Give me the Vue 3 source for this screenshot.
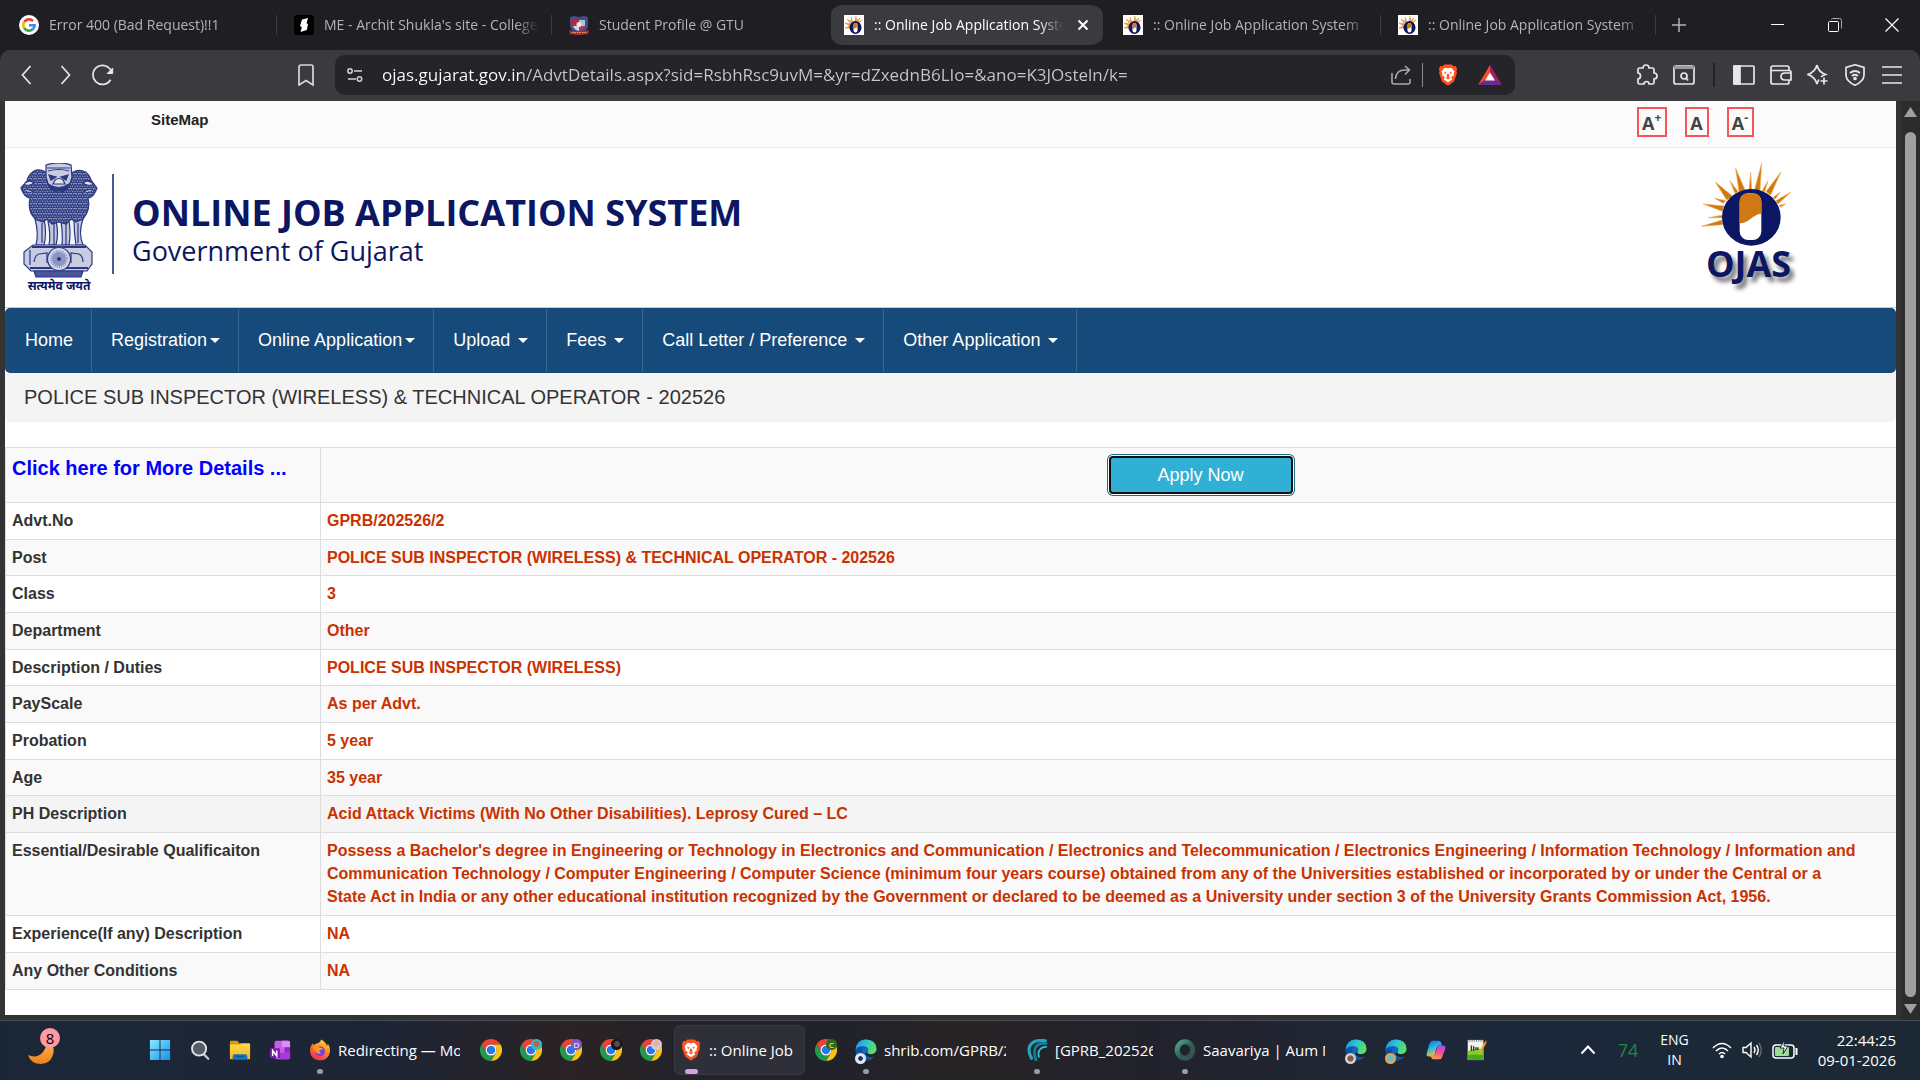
<script setup>
const tabs = [
  { title: 'Error 400 (Bad Request)!!1', icon: 'google' },
  { title: "ME - Archit Shukla's site - College", icon: 'site' },
  { title: 'Student Profile @ GTU', icon: 'gtu', last: true },
  { title: ':: Online Job Application System', icon: 'ojas', active: true },
  { title: ':: Online Job Application System', icon: 'ojas' },
  { title: ':: Online Job Application System', icon: 'ojas' },
]

const menu = [
  { text: 'Home' },
  { text: 'Registration', caret: true },
  { text: 'Online Application', caret: true },
  { text: 'Upload', caret: true, spaced: true },
  { text: 'Fees', caret: true, spaced: true },
  { text: 'Call Letter / Preference', caret: true, spaced: true },
  { text: 'Other Application', caret: true, spaced: true },
]

const details = [
  ['Advt.No', 'GPRB/202526/2'],
  ['Post', 'POLICE SUB INSPECTOR (WIRELESS) & TECHNICAL OPERATOR - 202526'],
  ['Class', '3'],
  ['Department', 'Other'],
  ['Description / Duties', 'POLICE SUB INSPECTOR (WIRELESS)'],
  ['PayScale', 'As per Advt.'],
  ['Probation', '5 year'],
  ['Age', '35 year'],
  ['PH Description', 'Acid Attack Victims (With No Other Disabilities). Leprosy Cured – LC'],
  [
    'Essential/Desirable Qualificaiton',
    "Possess a Bachelor's degree in Engineering or Technology in Electronics and Communication / Electronics and Telecommunication / Electronics Engineering / Information Technology / Information and Communication Technology / Computer Engineering / Computer Science (minimum four years course) obtained from any of the Universities established or incorporated by or under the Central or a State Act in India or any other educational institution recognized by the Government or declared to be deemed as a University under section 3 of the University Grants Commission Act, 1956.",
  ],
  ['Experience(If any) Description', 'NA'],
  ['Any Other Conditions', 'NA'],
]

const tasks = [
  { icon: 'windows', name: 'Start' },
  { icon: 'search', name: 'Search' },
  { icon: 'folder', name: 'File Explorer' },
  { icon: 'onenote', name: 'OneNote' },
  { icon: 'firefox', name: 'Firefox', label: 'Redirecting — Mozilla Firefox', size: 'wide', dot: true },
  { icon: 'chrome', name: 'Chrome' },
  { icon: 'chrome', name: 'Chrome', badge: 'teal' },
  { icon: 'chrome', name: 'Chrome', badge: 'purple', letter: 'D' },
  { icon: 'chrome', name: 'Chrome', badge: 'dark' },
  { icon: 'chrome', name: 'Chrome', badge: 'pink' },
  { icon: 'brave', name: 'Brave', label: ':: Online Job', size: 'small', active: true },
  { icon: 'chrome', name: 'Chrome', badge: 'green', letter: 'C' },
  { icon: 'edge', name: 'Edge', label: 'shrib.com/GPRB/202526', size: 'wide', dot: true, badge: 'gear' },
  { icon: 'swirl', name: 'Editor', label: '[GPRB_202526_2]', size: 'mid', dot: true },
  { icon: 'ring', name: 'Player', label: 'Saavariya | Aum Music', size: 'wide', dot: true },
  { icon: 'edge', name: 'Edge', badge: 'face' },
  { icon: 'edge', name: 'Edge', badge: 'orange' },
  { icon: 'copilot', name: 'Copilot' },
  { icon: 'notepad', name: 'Notepad++' },
]
</script>

<template>
  <div class="desktop">
    <svg class="defs" width="0" height="0" aria-hidden="true">
      <defs>
        <linearGradient id="gWin" x1="0" y1="0" x2="1" y2="1"><stop offset="0" stop-color="#8aeaff" /><stop offset="1" stop-color="#1490f0" /></linearGradient>
        <linearGradient id="gEdge" x1="0" y1="0" x2="1" y2="0.4"><stop offset="0" stop-color="#1b8fe0" /><stop offset="0.5" stop-color="#2cc4d4" /><stop offset="1" stop-color="#5be060" /></linearGradient>
        <linearGradient id="gFox" x1="0.8" y1="0" x2="0.3" y2="1"><stop offset="0" stop-color="#ffe14a" /><stop offset="0.45" stop-color="#ff8a1c" /><stop offset="1" stop-color="#f0235c" /></linearGradient>
        <linearGradient id="gFolder" x1="0" y1="0" x2="0" y2="1"><stop offset="0" stop-color="#ffd94f" /><stop offset="1" stop-color="#f6b921" /></linearGradient>
        <linearGradient id="gCopA" x1="0" y1="0" x2="0.4" y2="1"><stop offset="0" stop-color="#1d5fe0" /><stop offset="0.5" stop-color="#26b8e8" /><stop offset="1" stop-color="#f4c12c" /></linearGradient>
        <linearGradient id="gCopB" x1="0.6" y1="0" x2="0.3" y2="1"><stop offset="0" stop-color="#b04ae8" /><stop offset="0.5" stop-color="#f0558c" /><stop offset="1" stop-color="#ff9d4c" /></linearGradient>
        <linearGradient id="gMoon" x1="0" y1="0" x2="0" y2="1"><stop offset="0" stop-color="#ffc04a" /><stop offset="1" stop-color="#f07c1c" /></linearGradient>
        <linearGradient id="gRing" x1="0" y1="0" x2="1" y2="1"><stop offset="0" stop-color="#56a58d" /><stop offset="0.5" stop-color="#2c6455" /><stop offset="1" stop-color="#3b4a4a" /></linearGradient>
        <pattern id="mane" width="5" height="5" patternUnits="userSpaceOnUse">
          <rect width="5" height="5" fill="#8a92c0" />
          <path d="M0 1q1.2 3 2.5 0q1.2 3 2.5 0M-1.2 3.5q1.2 3 2.5 0q1.2 3 2.5 0q1.2 3 2.5 0" fill="none" stroke="#2a3880" stroke-width="1.1" />
        </pattern>
      </defs>
      <symbol id="i-google" viewBox="0 0 20 20">
        <circle cx="10" cy="10" r="10" fill="#fff" />
        <g fill="none" stroke-width="2.6">
          <path d="M14.1 6.1A5.7 5.7 0 0 0 5.1 7.1" stroke="#ea4335" />
          <path d="M5.1 7.1A5.7 5.7 0 0 0 5.1 12.9" stroke="#fbbc05" />
          <path d="M5.1 12.9A5.7 5.7 0 0 0 13.7 14.3" stroke="#34a853" />
          <path d="M13.7 14.3A5.7 5.7 0 0 0 15.6 10.2H10" stroke="#4285f4" />
        </g>
      </symbol>
      <symbol id="i-site" viewBox="0 0 20 20">
        <rect width="20" height="20" rx="3" fill="#000" />
        <path d="M8 4.5 14 3l-1.5 5.2 1.5.8-1.2 6L6.5 17l1.3-4.8L6 11z" fill="#fff" />
      </symbol>
      <symbol id="i-gtu" viewBox="0 0 20 20">
        <path d="M1 2 5 1l5 1 5-1 4 1v9q0 5-9 8-9-3-9-8z" fill="#4a4a86" />
        <path d="M3 5h7v6H3z" fill="#b42a3c" /><path d="M10 5h6v6h-6z" fill="#a9c4dc" />
        <path d="M4 11h6v5q-5-1-6-5z" fill="#cfd6e2" /><path d="M10 11h6q-1 4-6 5z" fill="#c03446" />
        <circle cx="10" cy="9.500" r="2.500" fill="#f0e6e0" />
        <path d="M0 15q10 4 20 0l-1 4q-9 2-18 0z" fill="#b02c48" />
        <path d="M3 17.500h14" stroke="#e0b04c" stroke-dasharray="1.500 1" />
      </symbol>
      <symbol id="i-ojas" viewBox="0 0 20 20">
        <rect width="20" height="20" fill="#fff" />
        <path d="M12 1 11 7 16 3 13 8 18 5 14 9M7 2l2 6L3 4l4 5-6-1 5 3-5 2h5" fill="#e89a3c" stroke="#e89a3c" stroke-width=".8" />
        <ellipse cx="11.500" cy="12.500" rx="6" ry="6.500" fill="#0c1662" />
        <rect x="9.500" y="8" width="4" height="9.500" rx="2" fill="#fff" />
        <path d="M9.500 10q0-2 2-2t2 2v2l-4 2z" fill="#d27a14" />
      </symbol>
      <symbol id="i-brave" viewBox="0 0 24 24">
        <path d="M8 .5h8l2 2 2.500-.3L22 5.500l-.8 2.200.6 2L18.500 19 12 23.700 5.500 19 2.200 9.700l.6-2L2 5.500l1.500-3.300L6 2.500z" fill="#fb5420" />
        <path d="M12 4.600 15.500 4l3.500 4-1 3 .4 1.500-2.900 1.700 1 2.800L12 20l-4.500-3 1-2.800-2.900-1.700L6 11 5 8l3.500-4z" fill="#fff" />
        <path d="M7.400 8.300l3 1-1.300 1.700zM16.600 8.300l-3 1 1.300 1.700zM11 10.500h2l.6 3-1.600 1-1.600-1zM9.200 15l2.800-.8 2.800.8L12 17z" fill="#fb5420" />
      </symbol>
      <symbol id="i-windows" viewBox="0 0 24 24">
        <path d="M1 1h10.500v10.500H1zM12.500 1H23v10.500H12.500zM1 12.500h10.500V23H1zM12.500 12.500H23V23H12.500z" fill="url(#gWin)" />
      </symbol>
      <symbol id="i-search" viewBox="0 0 24 24">
        <path d="m16 16.500 5 5" stroke="#c4c8cc" stroke-width="2.500" stroke-linecap="round" />
        <circle cx="11" cy="10.500" r="7.700" fill="#555d66" stroke="#e4e6e8" stroke-width="2" />
      </symbol>
      <symbol id="i-folder" viewBox="0 0 24 24">
        <path d="M1 3q0-1 1-1h7l2.500 2.500V8H1z" fill="#d79a12" />
        <path d="M1 6h10l2-1.500h9q1 0 1 1V21q0 1-1 1H2q-1 0-1-1z" fill="url(#gFolder)" />
        <path d="M4 22v-3.500q0-2 2-2h12q2 0 2 2V22z" fill="#1274c4" /><path d="M8 19h8" stroke="#0a4d8a" />
      </symbol>
      <symbol id="i-onenote" viewBox="0 0 24 24">
        <rect x="6" y="2" width="17" height="20" rx="2" fill="#c65ce8" />
        <path d="M14 2h7q2 0 2 2v5h-9z" fill="#e08cf8" /><path d="M17 9h6v6h-6z" fill="#8a2ac0" /><path d="M12 15h11v5q0 2-2 2h-9z" fill="#a838dc" />
        <rect x="1" y="10" width="11" height="11" rx="1.500" fill="#7e1cb4" />
        <path d="M4 18.500v-6l4.500 6v-6" fill="none" stroke="#fff" stroke-width="1.600" />
      </symbol>
      <symbol id="i-firefox" viewBox="0 0 24 24">
        <path d="M13.500.5q5 3 6 7 1-.5 1-2.500 3 4 2.500 8.500Q21.500 23 12 23.500 2 23 1 13 1 8 4 4.500q.3 1.500 1 2Q7 4.500 9.500 4.500 12 4 13.500.5z" fill="url(#gFox)" />
        <circle cx="12" cy="13.500" r="5.400" fill="#7a3fe0" />
        <path d="M5 9q3-2 7 .5l3 .5q-1 2.500-3.500 2-1 2 1.500 3.500-3 1.500-5.500-1T5 9z" fill="#ff9a24" />
      </symbol>
      <symbol id="i-chrome" viewBox="0 0 24 24">
        <path d="M1.600 6A12 12 0 0 1 22.400 6H12A6 6 0 0 0 6.800 15Z" fill="#e84335" />
        <path d="M1.600 6A12 12 0 0 1 22.400 6H12A6 6 0 0 0 6.800 15Z" fill="#fbc116" transform="rotate(120 12 12)" />
        <path d="M1.600 6A12 12 0 0 1 22.400 6H12A6 6 0 0 0 6.800 15Z" fill="#229a4c" transform="rotate(240 12 12)" />
        <circle cx="12" cy="12" r="6" fill="#fff" /><circle cx="12" cy="12" r="4.700" fill="#2a78ea" />
      </symbol>
      <symbol id="i-edge" viewBox="0 0 24 24">
        <circle cx="12" cy="12" r="11.500" fill="#1467c0" />
        <path d="M.8 11Q2 .5 12 .5 23 1 23.500 10.500q0 6-6 6-4 0-4-2 1-1 1-3 0-3.500-5-4Q3 7.500.8 11z" fill="url(#gEdge)" />
        <path d="M9 9q-3 4 0 9 3 4 10 2-4 4-9 3.500-8-3-9-11Q4 8 9 9z" fill="#0d4fa0" />
        <path d="M13.500 14.500q0 2 4 2 5 0 6-4.500l1 6-6 2q-6 0-7.500-4z" fill="#20242e" />
      </symbol>
      <symbol id="i-swirl" viewBox="0 0 24 24">
        <g fill="none" stroke-linecap="round">
          <path d="M21 2Q8 0 4 8 2 14 6 21" stroke="#1fa6bc" stroke-width="3.500" /><path d="M22 5Q13 4 10 10q-2 6 1 13" stroke="#157f98" stroke-width="3" /><path d="M22 8.500q-6 0-8 5-1 3 0 6" stroke="#2cc6d6" stroke-width="2" />
        </g>
      </symbol>
      <symbol id="i-ring" viewBox="0 0 24 24">
        <ellipse cx="12" cy="12" rx="8.500" ry="9" fill="none" stroke="url(#gRing)" stroke-width="5.500" />
      </symbol>
      <symbol id="i-copilot" viewBox="0 0 24 24">
        <path d="M8 2h7q2 0 2.500 2l1 3h-3q-2 0-3 3l-2 7q-.7 2-3 2H4q-3 0-2-4L5 5q1-3 3-3z" fill="url(#gCopA)" />
        <path d="M16 22H9q-2 0-2.500-2l-.5-2h2.500q2 0 3-3l2-6q.7-2 3-2H20q3 0 2 4l-3 8q-1 3-3 3z" fill="url(#gCopB)" />
      </symbol>
      <symbol id="i-notepad" viewBox="0 0 24 24">
        <path d="M3 1h17v22H3z" fill="#f2f4ec" /><path d="M3 13q8-3 17-2v12H3z" fill="#7ed030" /><path d="M3 18q8-2 17 0v5H3z" fill="#4aa81c" />
        <path d="M4 2h15" stroke="#888" stroke-dasharray="1 1" stroke-width="2" /><path d="M7 7v6M9.500 8v5M12 9v3M14 9v3" stroke="#333" stroke-width="1.500" />
        <path d="m21.500 3-6 11-1 3.500 3-2.500 6-11z" fill="#f0a41c" /><path d="m21.500 3 2 1 .5-2-1.500-.6z" fill="#d04838" />
      </symbol>
    </svg>

    <header class="tabstrip">
      <div class="tabs">
        <div v-for="(tab, i) in tabs" :key="i" class="slot" :class="{ active: tab.active, plain: tab.last }">
          <button class="tab" type="button">
            <svg class="fav"><use :href="'#i-' + tab.icon" /></svg>
            <span class="tab-title">{{ tab.title }}</span>
          </button>
          <button v-if="tab.active" class="tab-close" type="button" aria-label="Close tab">
            <svg width="12" height="12" viewBox="0 0 12 12"><path d="m1.500 1.500 9 9m0-9-9 9" stroke="#fff" stroke-width="2" /></svg>
          </button>
        </div>
      </div>
      <div class="window-side">
        <button type="button" class="plus" aria-label="New tab">
          <svg width="14" height="14" viewBox="0 0 14 14"><path d="M7 0v14M0 7h14" stroke="#b4b4b8" stroke-width="1.500" /></svg>
        </button>
        <div class="window-buttons">
          <button type="button" aria-label="Minimize"><svg width="14" height="14" viewBox="0 0 14 14"><path d="M0 6.500h13" stroke="#fff" /></svg></button>
          <button type="button" aria-label="Restore">
            <svg width="14" height="14" viewBox="0 0 14 14" fill="none" stroke="#fff"><rect x=".5" y="3.500" width="10" height="10" rx="1" /><path d="M3.500 1.500q0-1 1-1h7q2 0 2 2v8" stroke="#aaa" /></svg>
          </button>
          <button type="button" aria-label="Close"><svg width="14" height="14" viewBox="0 0 14 14"><path d="m.5.500 13 13m0-13-13 13" stroke="#fff" stroke-width="1.200" /></svg></button>
        </div>
      </div>
    </header>

    <div class="toolbar">
      <div class="nav-buttons">
        <button type="button" aria-label="Back"><svg width="22" height="22" viewBox="0 0 22 22"><path d="m14.500 2-8 9 8 9" /></svg></button>
        <button type="button" aria-label="Forward"><svg width="22" height="22" viewBox="0 0 22 22"><path d="m7.500 2 8 9-8 9" /></svg></button>
        <button type="button" aria-label="Reload"><svg width="22" height="22" viewBox="0 0 22 22"><path d="M18.600 15.800A9.500 9.500 0 1 1 19.500 8" /><path d="M20.700 4v5.500h-5.500z" fill="#e8e8ea" stroke-width="1" /></svg></button>
      </div>
      <button class="bookmark" type="button" aria-label="Bookmark"><svg width="22" height="22" viewBox="0 0 22 22"><path d="M4 3q0-2 2-2h10q2 0 2 2v18l-7-4.500L4 21z" stroke="#d8d8dc" /></svg></button>
      <div class="address">
        <svg width="16" height="16" viewBox="0 0 16 16"><g fill="none" stroke="#d4d4d8" stroke-width="1.500"><circle cx="3" cy="4" r="2.200" /><path d="M7 4h8M1 12h8" /><circle cx="12.500" cy="12" r="2.200" /></g></svg>
        <input class="url" type="text" aria-label="Address" value="ojas.gujarat.gov.in/AdvtDetails.aspx?sid=RsbhRsc9uvM=&amp;yr=dZxednB6LIo=&amp;ano=K3JOsteln/k=" />
        <button type="button" aria-label="Share"><svg width="20" height="20" viewBox="0 0 20 20"><path d="M1 8v9q0 2 2 2h14q2 0 2-2v-3M4.500 14Q5 5 14 5h4M14 1l4.500 4L14 9.500" stroke="#a8a8ac" stroke-width="1.600" /></svg></button>
        <span class="sep light"></span>
        <button type="button" class="shield" aria-label="Shields"><svg width="22" height="24"><use href="#i-brave" /></svg></button>
        <button type="button" aria-label="Rewards">
          <svg width="24" height="20" viewBox="0 0 24 20"><path d="M12 0 0 20l12-8z" fill="#ff4724" stroke="none" /><path d="M12 0l12 20-12-8z" fill="#9e1f63" stroke="none" /><path d="M0 20h24l-7-5H7z" fill="#662d91" stroke="none" /><path d="m12 7.500-5 8h10z" fill="#fff" stroke="none" /></svg>
        </button>
      </div>
      <div class="tools">
        <button type="button" aria-label="Extensions"><svg width="22" height="22" viewBox="0 0 22 22"><path d="M2 5.500q0-1.500 1.500-1.500H7q0-3 3-3t3 3h3.500Q18 4 18 5.500V9q3 0 3 3t-3 3v3.500q0 1.500-1.500 1.500H13q0-2.500-2.500-2.500T8 20H3.500Q2 20 2 18.500V15q2.500 0 2.500-3T2 9z" /></svg></button>
        <button type="button" aria-label="Page search"><svg width="22" height="22" viewBox="0 0 22 22"><rect x="1" y="2" width="20" height="18" rx="2" /><path d="M1 3.500h20" stroke="#9a9a9e" stroke-width="3" /><circle cx="11" cy="12" r="3" /><path d="m13 14 2 2.500" /></svg></button>
        <span class="sep"></span>
        <button type="button" aria-label="Sidebar"><svg width="22" height="22" viewBox="0 0 22 22"><rect x="1" y="2" width="20" height="18" rx="1" /><path d="M1 2h6v18H1z" fill="#e8e8ea" /></svg></button>
        <button type="button" aria-label="Wallet"><svg width="22" height="22" viewBox="0 0 22 22"><path d="M19 6.500V4q0-2-2-2H3Q1 2 1 4v14q0 2 2 2h14q2 0 2-2v-2" /><path d="M1 6.500h18q2 0 2 2V16h-6q-4 0-4-3.500T15 9h6" /></svg></button>
        <button type="button" aria-label="Assistant"><svg width="22" height="22" viewBox="0 0 22 22"><path d="M10 1q1.500 7 8.500 9.500-3 1-4.500 2.500M10 1Q8 8 1 10.500 8 13 10 20q.6-3 2-4.500M17 13.500v7M13.500 17h7" /></svg></button>
        <button type="button" aria-label="VPN"><svg width="22" height="22" viewBox="0 0 22 22"><path d="M11 .8 20 3.500v8q-.5 6-9 9.700Q2.500 17.500 2 11.500v-8z" /><path d="M6 9q5-4 10 0M8 12q3-2.500 6 0" /><circle cx="11" cy="14.500" r="1" fill="#fff" /></svg></button>
        <button type="button" aria-label="Menu"><svg width="22" height="22" viewBox="0 0 22 22"><path d="M1 3h20M1 11h20M1 19h20" /></svg></button>
      </div>
    </div>

    <div class="viewport">
      <main class="page">
        <div class="topbar">
          <a href="#sitemap" class="sitemap">SiteMap</a>
          <div class="sizers">
            <button type="button">A<sup>+</sup></button>
            <button type="button">A</button>
            <button type="button">A<sup>-</sup></button>
          </div>
        </div>

        <div class="masthead">
          <div class="emblem">
            <svg width="78" height="115" viewBox="0 0 78 115">
              <g stroke="#2a3880" stroke-width="1.200">
                <path d="M15 56h47l-2 27H17z" fill="#f2f3f9" stroke="none" />
                <path d="M15 56q4 14 1 26h8q3-12 0-26zM28 58q3 14 1 24h7q3-12 0-24zM41 58q2 14 1 24h7q2-12 0-24zM54 56q0 14 2 26h7q-5-12 0-26z" fill="#c3c8e0" />
                <path d="M22 60v20M34 60v22M46 60v22M58 60v20" fill="none" />
                <path d="M27 10Q20 5 14 8 8 12 7 18L1 25q3 9 9 10Q7 50 17 57l6 2 4-3 5 5 7-2 7 2 5-5 5 3 7-3q8-9 5-21 6-1 9-10l-6-8Q69 10 63 8q-7-2-12 3z" fill="url(#mane)" />
                <path d="M5 20q5-4 9 0-3 3-8 2M4 27q5-2 10 3M72 20q-5-4-9 0 3 3 8 2M73 27q-5-2-10 3" fill="#e4e7f2" />
                <path d="M26 2q13-4 25 0l1 12-3 10q-5 5-10 5t-10-5l-3-10z" fill="#c8cce2" />
                <path d="M27 5h23M28 8q11-3 21 0" fill="none" />
                <path d="m29 12 7 2-5 3zM48 12l-7 2 5 3z" fill="#2a3880" />
                <path d="M35 17q4-3 8 0l2 4H33z" fill="#e2e5f0" /><path d="M28 21q11 7 21 0-2 7-10 7t-11-7z" fill="#2a3880" />
                <path d="M13 82h52l7 7v12l-5 7H11l-7-7V89z" fill="#c8cce2" />
                <path d="M12 84h54M10 105h58" fill="none" stroke-width="2" />
                <path d="M10 87v15M14 99q1-7 5-8l8-1v10M63 99q0-6-4-8l-8-1v10" fill="none" />
                <circle cx="39" cy="96" r="11.500" fill="#d5d9ea" /><circle cx="39" cy="96" r="7" fill="#8d95c2" stroke="#8d95c2" stroke-dasharray="1 1" stroke-width="4" />
                <circle cx="39" cy="96" r="1.500" fill="#2a3880" />
                <path d="M14 108h49l-2 6H16z" fill="#4a5698" />
              </g>
            </svg>
            <span class="motto">सत्यमेव जयते</span>
          </div>
          <span class="rule"></span>
          <div class="names">
            <h1>ONLINE JOB APPLICATION SYSTEM</h1>
            <p>Government of Gujarat</p>
          </div>
          <div class="ojas">
            <svg width="97" height="87" viewBox="180 60 291 261">
              <path fill="#cf7814" stroke="#efaa50" stroke-width="2" d="M365 70 343 152h17zM422 97l-44 58 14 10zM287 85l10 70 18-5zM332 97l-5 53h8zM384 122l-17 30 7 3zM270 122l15 38 9-5zM226 126l34 54 17-12zM224 175l26 15 7-8zM190 192l57 22 5-16zM205 233h41v-7zM185 259l62-5-1-14zM420 157l-20 15 5 6zM452 157l-44 25 6 10zM437 192l-19 4 3 6z" />
              <ellipse cx="334" cy="232" rx="88" ry="85" fill="#0c1662" />
              <rect x="299" y="160" width="65" height="140" rx="26" fill="#fff" />
              <path d="M299 250v-64q0-26 26-26h13q26 0 26 26v35q-14 0-30 14-18 16-35 15z" fill="#cf7814" />
            </svg>
            <strong>OJAS</strong>
          </div>
        </div>

        <nav class="menu">
          <a v-for="item in menu" :key="item.text" href="#menu">{{ item.text }}<span v-if="item.caret" class="caret" :class="{ spaced: item.spaced }"></span></a>
        </nav>

        <h2 class="title">POLICE SUB INSPECTOR (WIRELESS) &amp; TECHNICAL OPERATOR - 202526</h2>

        <table class="details">
          <colgroup><col class="label-col" /><col /></colgroup>
          <tbody>
            <tr class="lead">
              <th><a href="#details">Click here for More Details ...</a></th>
              <td><button type="button" class="apply">Apply Now</button></td>
            </tr>
            <tr v-for="[name, value] in details" :key="name" :class="{ hovered: name === 'PH Description' }">
              <th scope="row">{{ name }}</th>
              <td>{{ value }}</td>
            </tr>
          </tbody>
        </table>
      </main>
      <div class="scrollbar">
        <svg width="13" height="10" viewBox="0 0 13 10"><path d="M6.500 0 13 10H0z" fill="#a0a0a0" /></svg>
        <span class="thumb"></span>
        <svg width="13" height="10" viewBox="0 0 13 10"><path d="M0 0h13L6.500 10z" fill="#a0a0a0" /></svg>
      </div>
    </div>

    <footer class="taskbar">
      <button class="weather" type="button" aria-label="Weather">
        <svg width="28" height="28" viewBox="0 0 28 28"><path d="M19 1q9 4 7.500 13Q24 25 14 25 4 25 1 16q9 4 15-3 4-5 3-12z" fill="url(#gMoon)" /></svg>
        <span class="count">8</span>
      </button>
      <div class="tasks">
        <button v-for="(task, i) in tasks" :key="i" type="button" class="task" :class="[task.size, { current: task.active }]" :aria-label="task.label ? null : task.name">
          <span class="task-icon">
            <svg width="22" height="22"><use :href="'#i-' + task.icon" /></svg>
            <span v-if="task.badge" class="badge" :class="task.badge">{{ task.letter }}</span>
            <span v-if="task.dot || task.active" class="dot"></span>
          </span>
          <span v-if="task.label" class="task-label">{{ task.label }}</span>
        </button>
      </div>
      <div class="tray">
        <button type="button" aria-label="Hidden icons"><svg width="16" height="10" viewBox="0 0 16 10"><path d="m1.500 8.500 6.500-7 6.500 7" fill="none" stroke="#fff" stroke-width="2" /></svg></button>
        <span class="temp">74</span>
        <span class="lang">ENG<br />IN</span>
        <span class="status">
          <svg width="20" height="18" viewBox="0 0 20 18"><g fill="none" stroke="#fff" stroke-width="1.600"><path d="M1 7q9-9 18 0M4 10q6-6 12 0M7 13q3-3 6 0" /></g><circle cx="10" cy="15.500" r="1.800" fill="#fff" /></svg>
          <svg width="20" height="18" viewBox="0 0 20 18"><g fill="none" stroke="#fff" stroke-width="1.400"><path d="M1 6.500h3L9 2v14l-5-4.500H1zM12 6q2 3 0 6M14.500 4q3.500 5 0 10" /><path d="M17 2q4.500 7 0 14" stroke="#667" /></g></svg>
          <svg width="26" height="20" viewBox="0 0 26 20"><rect x="1" y="5" width="21" height="13" rx="3" fill="none" stroke="#fff" stroke-width="1.500" /><rect x="3" y="7" width="14" height="9" rx="1" fill="#9cdc94" /><path d="M24.500 8v7" stroke="#fff" stroke-width="2" /><path d="M12.500 0 8 8h4l-1 6 5-8h-4z" fill="#fff" stroke="#1c2a3c" /></svg>
        </span>
        <span class="clock">22:44:25<br />09-01-2026</span>
      </div>
    </footer>
  </div>
</template>

<style>
body {
  margin: 0;
  background: #333;
}
</style>

<style scoped>
.desktop {
  --ui: "Open Sans", "Noto Sans", sans-serif;
  --navy: #0c1662;
  display: flex;
  flex-direction: column;
  min-height: 100vh;
  background: #333;
  font-family: "Liberation Sans", Arial, sans-serif;
}
.desktop *,
.desktop *::before {
  box-sizing: border-box;
}
.defs {
  position: absolute;
}
button {
  display: flex;
  align-items: center;
  justify-content: center;
  padding: 0;
  border: 0;
  background: none;
  color: inherit;
  font: inherit;
}
svg {
  display: block;
  flex: none;
}

/* Tab strip */
.tabstrip {
  display: flex;
  height: 50px;
  background: #1f1e23;
  color: #b4b4b8;
  font: 14px/20px var(--ui);
}
.tabs {
  display: flex;
  flex: 1;
  min-width: 0;
  padding-left: 2px;
}
.slot {
  position: relative;
  display: flex;
  flex: 1 1 0;
  min-width: 0;
  align-items: center;
  padding: 0 13px 0 17px;
}
.slot::before {
  content: "";
  position: absolute;
  right: 0;
  width: 1px;
  height: 20px;
  background: #3c3c42;
}
.slot.active::before,
.slot.plain::before {
  display: none;
}
.slot.active {
  padding: 0 14px 0 13px;
  border: solid transparent;
  border-width: 5px 3px 5px 4px;
  border-radius: 15px;
  background: #3b3a3f padding-box;
  color: #fff;
}
.tab {
  flex: 1;
  min-width: 0;
  justify-content: flex-start;
  gap: 10px;
}
.fav {
  width: 20px;
  height: 20px;
}
.tab-title {
  flex: 1;
  min-width: 0;
  overflow: hidden;
  text-align: left;
  white-space: nowrap;
  mask-image: linear-gradient(90deg, #000 calc(100% - 24px), transparent);
}
.tab-close {
  margin-left: 14px;
}
.window-side {
  display: flex;
  flex: none;
  width: 264px;
  align-items: center;
  justify-content: space-between;
}
.plus {
  width: 46px;
  height: 40px;
}
.window-buttons {
  display: flex;
}
.window-buttons button {
  width: 57px;
  height: 50px;
}

/* Toolbar */
.toolbar {
  display: flex;
  height: 51px;
  align-items: center;
  padding: 0 17px 1px 16px;
  border-radius: 10px 10px 0 0;
  background: #3b3a3f;
  box-shadow: 0 -10px 0 #1f1e23;
}
.toolbar svg {
  fill: none;
  stroke: #e8e8ea;
  stroke-width: 1.7;
}
.toolbar use {
  stroke: none;
}
.nav-buttons {
  display: flex;
  gap: 16px;
}
.bookmark {
  margin-left: 181px;
}
.address {
  display: flex;
  flex: 1;
  height: 40px;
  margin: 0 121px 0 18px;
  align-items: center;
  padding: 0 13px 0 12px;
  border-radius: 10px;
  background: #252429;
}
.url {
  flex: 1;
  min-width: 0;
  padding: 0;
  border: 0;
  margin-left: 19px;
  outline: 0;
  background: linear-gradient(90deg, #fff 140px, #c8c8cc 140px);
  background-clip: text;
  color: transparent;
  font: 17px/24px var(--ui);
}
.sep {
  width: 2px;
  height: 24px;
  background: #242428;
}
.sep.light {
  width: 1px;
  margin: 0 14px 0 11px;
  background: #8c8c90;
}
.shield {
  margin-right: 19px;
}
.tools {
  display: flex;
  align-items: center;
  gap: 15px;
}
.tools .sep {
  margin: 0 3px;
}

/* Page */
.viewport {
  display: flex;
  flex: 1;
}
.page {
  flex: 1;
  min-width: 0;
  margin: 0 5px 5px;
  background: #fff;
  color: #333;
}
.topbar {
  display: flex;
  height: 47px;
  justify-content: space-between;
  padding: 6px 142px 0 146px;
  border-bottom: 1px solid #ececec;
  background: #fbfbfb;
}
.sitemap {
  color: #222;
  font-size: 15px;
  font-weight: 700;
  line-height: 26px;
  text-decoration: none;
}
.sizers {
  display: flex;
  gap: 18px;
}
.sizers button {
  height: 30px;
  align-items: flex-start;
  padding: 0 4px 0 3px;
  border: 2px solid #f95458;
  font: 700 18px/28px var(--ui);
  color: #444;
}
.sizers sup {
  font-size: 12px;
  line-height: 18px;
}
.masthead {
  display: flex;
  height: 160px;
  align-items: flex-start;
  padding: 15px 99px 0 15px;
  border-bottom: 1px solid #ccc;
  color: var(--navy);
}
.emblem {
  display: flex;
  flex-direction: column;
  align-items: center;
}
.motto {
  width: 78px;
  font: 700 12px/16px "Noto Sans", "Noto Sans Devanagari", sans-serif;
  text-align: center;
  white-space: nowrap;
}
.rule {
  width: 2px;
  height: 100px;
  margin: 11px 18px 0 14px;
  background: #4c5790;
}
.names {
  padding-top: 25px;
  font-family: var(--ui);
}
.names h1 {
  margin: 0;
  font-size: 36px;
  line-height: 49px;
}
.names p {
  margin: -5px 0 0;
  font-size: 27px;
  line-height: 37px;
}
.ojas {
  display: flex;
  flex-direction: column;
  align-items: center;
  margin: -3px 0 0 auto;
}
.ojas strong {
  font: 700 36px/34px var(--ui);
  text-shadow: 4px 5px 4px #777;
}
.menu {
  display: flex;
  height: 65px;
  padding-left: 1px;
  border-radius: 5px;
  background: #164a7a;
}
.menu a {
  display: flex;
  align-items: center;
  padding: 0 18px 0 19px;
  border-right: 1px solid #3a6690;
  margin: 1px 0;
  color: #fff;
  font-size: 18px;
  text-decoration: none;
}
.caret {
  margin-left: 3px;
  border: 5px solid transparent;
  border-top-color: #fff;
  border-bottom: 0;
}
.caret.spaced {
  margin-left: 8px;
}
.title {
  margin: 0 0 25px;
  padding: 0 19px;
  border-radius: 0 0 5px 5px;
  background: #f4f4f4;
  font-size: 20px;
  font-weight: 400;
  line-height: 49px;
}
.details {
  width: 100%;
  border-collapse: collapse;
  table-layout: fixed;
  margin-bottom: 25px;
  font-size: 16px;
  font-weight: 700;
  line-height: 23px;
}
.label-col {
  width: 315px;
}
.details th,
.details td {
  padding: 6px 6px 7px;
  border: 1px solid #ddd;
  text-align: left;
  vertical-align: top;
}
.details td {
  padding-right: 36px;
  border-right: 0;
  color: #c93200;
}
.details tr:nth-child(odd) {
  background: #f9f9f9;
}
.details tr.hovered {
  background: #f4f4f4;
}
.details tr:nth-child(3n):nth-child(-n + 9) > * {
  padding-bottom: 6px;
}
.lead th {
  font-size: 20px;
  line-height: 28px;
}
.details .lead td {
  padding: 8px 0;
}
.lead a {
  color: #00f;
  text-decoration: none;
}
.apply {
  width: 184px;
  height: 38px;
  margin-left: 50%;
  border: 2px solid #101010;
  border-radius: 4px;
  background: #31b0d5;
  box-shadow: 0 0 0 1px #fff, 0 0 0 2px #1b6d85;
  color: #fff;
  font-size: 18px;
  font-weight: 400;
}
.scrollbar {
  display: flex;
  flex-direction: column;
  width: 19px;
  align-items: center;
  padding: 6px 0;
  background: #2c2c2c;
}
.thumb {
  flex: 1;
  width: 11px;
  margin: 15px 0 7px;
  border-radius: 6px;
  background: #9f9f9f;
}

/* Taskbar */
.taskbar {
  display: flex;
  height: 60px;
  align-items: center;
  padding: 0 24px 2px 0;
  border-top: 1px solid #454b52;
  background: linear-gradient(90deg, #1b2737, #1d2535 20%, #2b2224 30%, #22222c 37%, #22222b 44%, #272425 50%, #22222c 60%, #202633 70%, #1b283b 80%, #1c2833);
  color: #fff;
  font: 15px/20px var(--ui);
}
.weather {
  position: relative;
  width: 140px;
  height: 48px;
  padding: 6px 0 0 27px;
  justify-content: flex-start;
}
.count {
  position: absolute;
  top: 2px;
  left: 40px;
  width: 20px;
  height: 20px;
  border-radius: 50%;
  background: #ff99a4;
  color: #000;
  text-align: center;
}
.tasks {
  display: flex;
  flex: 1;
  min-width: 0;
}
.task {
  width: 40px;
  height: 50px;
  flex: none;
  justify-content: flex-start;
  gap: 6px;
  padding: 0 8px;
}
.task.wide {
  width: 171px;
  padding-right: 11px;
}
.task.mid {
  width: 148px;
  padding-right: 12px;
}
.task.small {
  width: 131px;
  margin: 0 1px 0 3px;
  padding: 0 4px;
}
.task.current {
  border: 1px solid #393a44;
  border-radius: 6px;
  background: #2e2f38;
}
.task-icon {
  position: relative;
  display: flex;
  flex: none;
  width: 24px;
  height: 48px;
  align-items: center;
  justify-content: center;
}
.task-label {
  overflow: hidden;
  flex: 1;
  text-align: left;
  white-space: nowrap;
}
.dot {
  position: absolute;
  bottom: 0;
  left: 9px;
  width: 6px;
  height: 5px;
  border-radius: 3px;
  background: #9a9ca2;
}
.current .dot {
  left: 6px;
  width: 13px;
  background: #d79ee0;
}
.badge {
  position: absolute;
  top: 13px;
  left: 12px;
  width: 11px;
  height: 11px;
  border-radius: 50%;
  color: #fff;
  font-size: 8px;
  line-height: 11px;
  text-align: center;
}
.badge.teal { background: radial-gradient(circle at 50% 45%, #b06a48 35%, #38b8c4 40%); }
.badge.purple { background: #7e57c2; }
.badge.dark { background: radial-gradient(circle at 55% 45%, #57504c 25%, #171416 45%); }
.badge.pink { background: radial-gradient(circle at 50% 40%, #e8b090 30%, #d8c4dc 40%); }
.badge.green { background: #2f6a1c; }
.badge.gear { top: 27px; left: 1px; background: radial-gradient(circle, #26324a 25%, #dfe6f4 35%); }
.badge.face { top: 27px; left: 1px; background: radial-gradient(circle, #8a5a48 35%, #d8cfc8 45%); }
.badge.orange { top: 27px; left: 1px; background: radial-gradient(circle, #5cc0c8 35%, #f0a048 45%); }
.tray {
  display: flex;
  flex: none;
  align-items: center;
}
.temp {
  margin: 0 22px;
  color: #1d8a3e;
  font-size: 18px;
}
.lang {
  font-size: 14px;
  text-align: center;
}
.status {
  display: flex;
  align-items: center;
  gap: 10px;
  margin: 0 20px 0 23px;
}
.clock {
  text-align: right;
}
</style>
